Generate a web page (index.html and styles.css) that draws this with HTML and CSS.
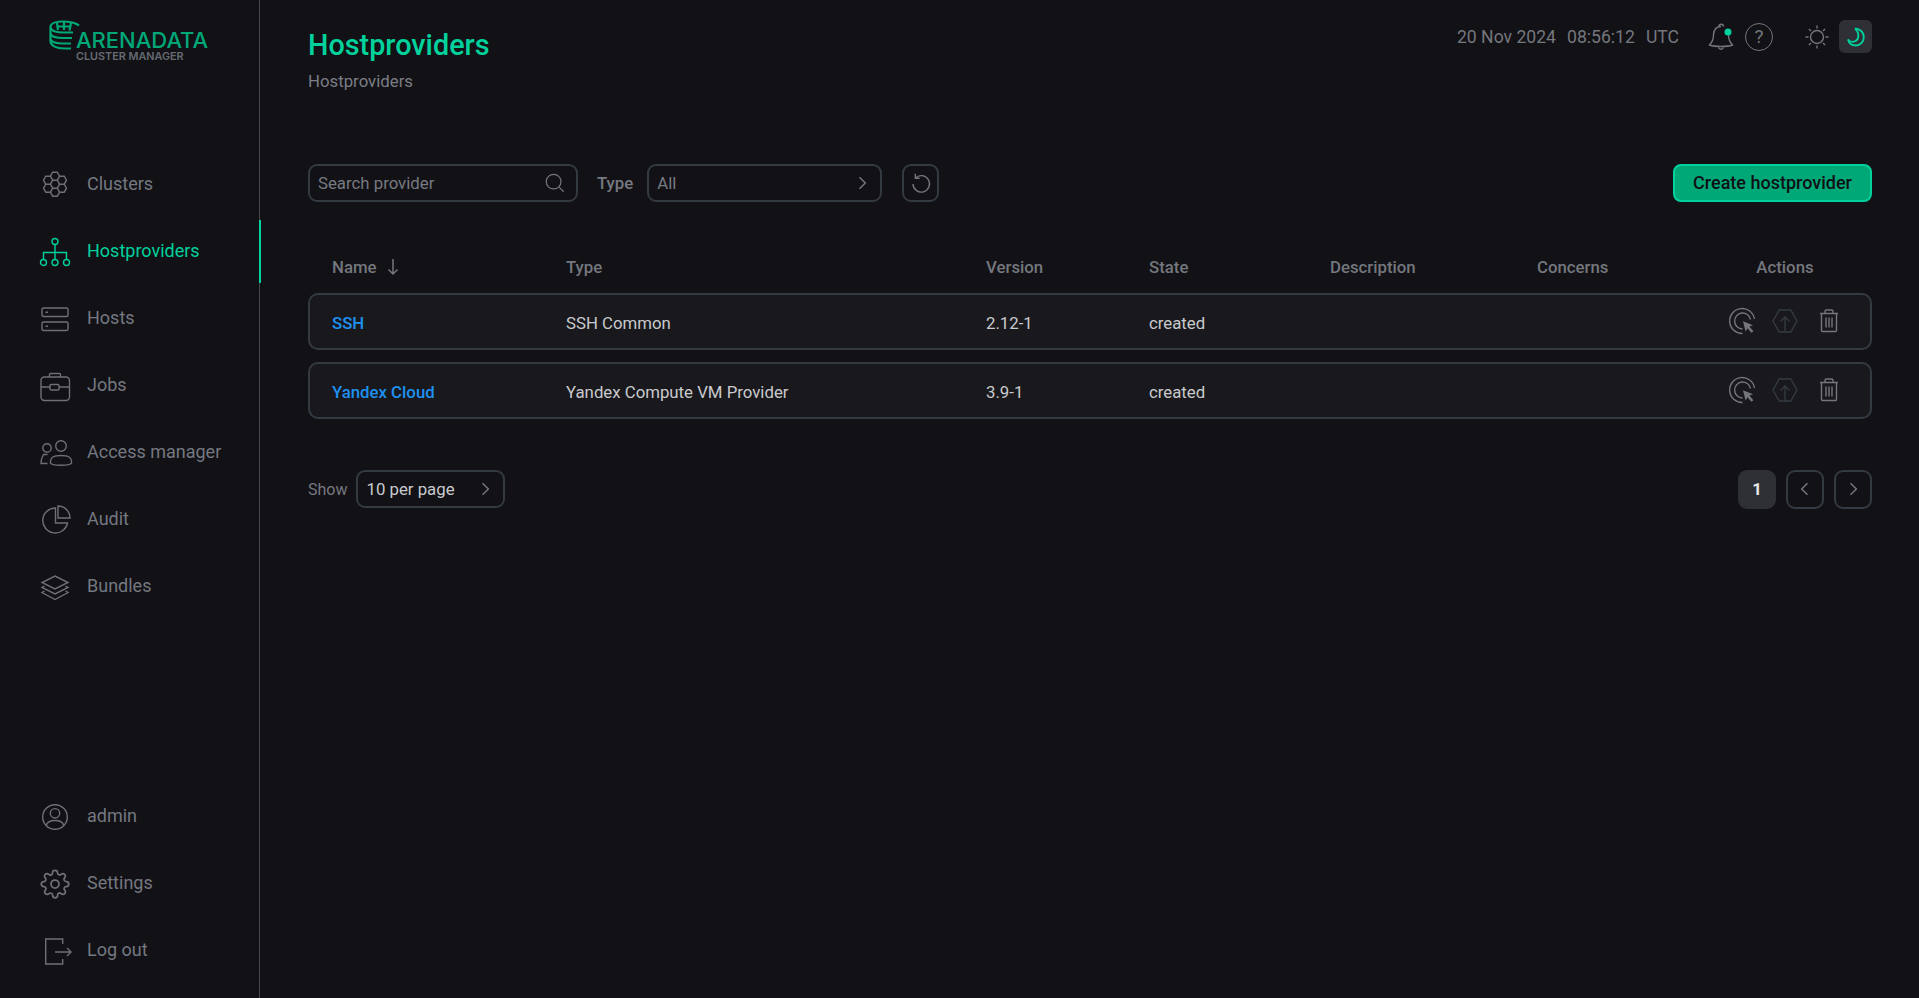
FILE: index.html
```html
<!DOCTYPE html>
<html lang="en">
<head>
<meta charset="utf-8">
<title>Hostproviders</title>
<link rel="stylesheet" href="styles.css">
</head>
<body>
<svg class="defs" width="0" height="0" aria-hidden="true">
  <symbol id="i-click" viewBox="0 0 30 30">
    <path d="M15.5 27.5A12.5 12.5 0 1 1 27.5 13" />
    <path d="M15.5 23A8 8 0 1 1 23.5 13.5" />
    <path class="solid" d="M16 15.2L26 19.3L22.4 20.6L26.4 25.2L24.4 26.8L20.6 22.3L18.6 25.6Z" />
  </symbol>
  <symbol id="i-up" viewBox="0 0 30 30">
    <path d="M9.2 4H20.8L27 15L20.8 26H9.2L3 15Z" />
    <path d="M15 26V11M10.5 15.5L15 11L19.500 15.500" />
  </symbol>
  <symbol id="i-trash" viewBox="0 0 30 30">
    <path d="M6 7.500H24M11 7.500V5.500A1.500 1.500 0 0 1 12.500 4H17.500A1.500 1.500 0 0 1 19 5.500V7.500M7.500 7.500V24.500A1 1 0 0 0 8.500 25.500H21.500A1 1 0 0 0 22.500 24.500V7.500M12 11.500V21.500M15 11.500V21.500M18 11.500V21.500" />
  </symbol>
</svg>

<aside class="sidebar">
  <div class="logo">
    <svg class="logo-mark" viewBox="0 0 31 30" width="31" height="30">
      <path d="M30 5.500C26 2.500 20 1.500 14 1.500C8 1.500 1.500 3 1.500 7V21C1.500 26 8 28.500 15 28.500H22" />
      <path d="M1.500 8C3 11 9 12.500 14 12.500H24M1.500 14C3 17 9 18 14 18H23M1.500 19.500C3 22.500 9 23.500 14 23.500H22" />
      <path d="M8 3L9 10M15 2V10M22 3L20.500 10.500M7.500 6.500H22" />
    </svg>
    <div class="logo-text">
      <span class="logo-name">ARENADATA</span>
      <span class="logo-sub">CLUSTER MANAGER</span>
    </div>
  </div>

  <nav class="nav">
    <a class="nav-item">
      <svg class="nav-icon" viewBox="0 0 30 30"><path d="M10.400 6.200L12.700 2.200H17.300L19.600 6.200L17.300 10.200H12.700ZM10.400 14.200L12.700 10.200H17.300L19.600 14.200L17.300 18.200H12.700ZM10.400 22.200L12.700 18.200H17.300L19.600 22.200L17.300 26.200H12.700ZM3.500 10.200L5.800 6.200H10.400L12.700 10.200L10.400 14.200H5.800ZM17.300 10.200L19.600 6.200H24.200L26.500 10.200L24.200 14.200H19.600ZM3.500 18.200L5.800 14.200H10.400L12.700 18.200L10.400 22.200H5.800ZM17.300 18.200L19.600 14.200H24.200L26.500 18.200L24.200 22.200H19.600Z"/></svg>
      <span>Clusters</span>
    </a>
    <a class="nav-item active">
      <svg class="nav-icon" viewBox="0 0 30 30"><circle cx="15" cy="4.500" r="3"/><path d="M15 7.500V22M3.500 22V15.500H26.500V22"/><circle cx="3.500" cy="25.500" r="3"/><circle cx="15" cy="25.500" r="3"/><circle cx="26.500" cy="25.500" r="3"/></svg>
      <span>Hostproviders</span>
    </a>
    <a class="nav-item">
      <svg class="nav-icon" viewBox="0 0 30 30"><rect x="2" y="4" width="26" height="8.500" rx="1.500"/><rect x="2" y="18" width="26" height="8.500" rx="1.500"/><path d="M5.500 8.200H8M5.500 22.200H8"/></svg>
      <span>Hosts</span>
    </a>
    <a class="nav-item">
      <svg class="nav-icon" viewBox="0 0 30 30"><rect x="1" y="6" width="28.500" height="23.500" rx="3.500"/><path d="M9.500 6V3.500A1 1 0 0 1 10.500 2.500H19.500A1 1 0 0 1 20.500 3.500V6M1 16H10M19 16H29.500"/><rect x="10" y="13.500" width="9" height="5.500" rx="1"/></svg>
      <span>Jobs</span>
    </a>
    <a class="nav-item">
      <svg class="nav-icon" viewBox="0 0 30 30"><circle cx="21" cy="8" r="5.300"/><path d="M10.500 25C10 19 14 17.500 21 17.500C28 17.500 32 19 31.500 25C30 28 12 28 10.500 25Z"/><circle cx="7" cy="10" r="4.200"/><path d="M7.500 16.500H3.500C2 19 1 22 1 25.500H7.500"/></svg>
      <span>Access manager</span>
    </a>
    <a class="nav-item">
      <svg class="nav-icon" viewBox="0 0 30 30"><path d="M15.500 3A12.500 12.500 0 1 0 27.500 18H15.500Z"/><path d="M18 1A12 12 0 0 1 30 13H18Z"/></svg>
      <span>Audit</span>
    </a>
    <a class="nav-item">
      <svg class="nav-icon" viewBox="0 0 30 30"><path d="M15 4L28 10.500L15 17L2 10.500Z"/><path d="M4.500 14L2 15.500L15 22L28 15.500L25.500 14"/><path d="M4.500 19L2 20.500L15 27.500L28 20.500L25.500 19"/></svg>
      <span>Bundles</span>
    </a>
  </nav>

  <nav class="nav nav-bottom">
    <a class="nav-item">
      <svg class="nav-icon" viewBox="0 0 30 30"><circle cx="15" cy="15" r="12.300"/><circle cx="15" cy="11.300" r="4.700"/><path d="M6.300 23.700C7 19.500 11 18.500 15 18.500S23 19.500 23.700 23.700"/></svg>
      <span>admin</span>
    </a>
    <a class="nav-item">
      <svg class="nav-icon" viewBox="0 0 24 24"><circle cx="12" cy="12" r="3.200"/><path d="M19.400 15a1.650 1.650 0 0 0 .33 1.820l.06.06a2 2 0 0 1 0 2.830 2 2 0 0 1-2.830 0l-.06-.06a1.650 1.650 0 0 0-1.820-.33 1.650 1.650 0 0 0-1 1.510V21a2 2 0 0 1-2 2 2 2 0 0 1-2-2v-.09A1.650 1.650 0 0 0 9 19.400a1.650 1.650 0 0 0-1.820.33l-.06.06a2 2 0 0 1-2.830 0 2 2 0 0 1 0-2.830l.06-.06a1.650 1.650 0 0 0 .33-1.820 1.650 1.650 0 0 0-1.510-1H3a2 2 0 0 1-2-2 2 2 0 0 1 2-2h.09A1.650 1.650 0 0 0 4.600 9a1.650 1.650 0 0 0-.33-1.820l-.06-.06a2 2 0 0 1 0-2.830 2 2 0 0 1 2.830 0l.06.06a1.650 1.650 0 0 0 1.820.33H9a1.650 1.650 0 0 0 1-1.510V3a2 2 0 0 1 2-2 2 2 0 0 1 2 2v.09a1.650 1.650 0 0 0 1 1.510 1.650 1.650 0 0 0 1.820-.33l.06-.06a2 2 0 0 1 2.830 0 2 2 0 0 1 0 2.830l-.06.06a1.650 1.650 0 0 0-.33 1.820V9a1.650 1.650 0 0 0 1.510 1H21a2 2 0 0 1 2 2 2 2 0 0 1-2 2h-.09a1.650 1.650 0 0 0-1.510 1z"/></svg>
      <span>Settings</span>
    </a>
    <a class="nav-item">
      <svg class="nav-icon" viewBox="0 0 30 30"><path d="M22.700 8V3H5.700V28H22.700V23"/><path d="M15 16H31M27 12L31 16L27 20"/></svg>
      <span>Log out</span>
    </a>
  </nav>
</aside>

<main class="main">
  <header class="page-head">
    <div class="page-title-block">
      <h1 class="page-title">Hostproviders</h1>
      <div class="breadcrumb">Hostproviders</div>
    </div>
    <div class="top-tools">
      <div class="clock"><span>20 Nov 2024</span><span>08:56:12</span><span>UTC</span></div>
      <div class="top-icons">
        <svg class="top-icon" viewBox="0 0 30 30">
          <path d="M13 4.500A2.200 2.200 0 1 1 17.500 4.500"/>
          <path d="M15 4.500C9.500 4.500 7.500 9 7.500 13C7.500 18 6 20.500 3.500 23C9 25 21 25 26.500 23C24 20.500 22.500 18 22.500 13"/>
          <path d="M12.500 25.500A2.700 2.700 0 0 0 17.500 25.500"/>
          <circle class="dot" cx="22" cy="10" r="3.500"/>
        </svg>
        <span class="help">?</span>
        <svg class="top-icon sun" viewBox="0 0 30 30">
          <circle cx="15" cy="15" r="6.500"/>
          <path d="M15 3.500V6.500M15 23.500V26.500M3.500 15H6.500M23.500 15H26.500M6.900 6.900L9 9M21 21L23.100 23.100M6.900 23.100L9 21M21 9L23.100 6.900"/>
        </svg>
        <span class="moon-btn">
          <svg class="moon" viewBox="0 0 24 24"><path d="M11 3.500C15 3.500 19.800 6.700 19.800 12.200C19.800 17 16 20.500 11.800 20.500C8 20.500 5 18.300 4 14.500"/><path d="M4 14.500C6 17 9.500 17.500 12 15.800C15.500 13.500 15 6.800 11 3.500"/></svg>
        </span>
      </div>
    </div>
  </header>

  <section class="toolbar">
    <div class="field search">
      <span class="placeholder">Search provider</span>
      <svg class="field-icon" viewBox="0 0 24 24"><circle cx="10.500" cy="10.500" r="8"/><path d="M16.500 16.500L21.500 21.500"/></svg>
    </div>
    <span class="label">Type</span>
    <div class="field type-select">
      <span class="placeholder">All</span>
      <svg class="chev" viewBox="0 0 24 24"><path d="M9 5L16 12L9 19"/></svg>
    </div>
    <button class="reset" type="button" aria-label="Reset">
      <svg viewBox="0 0 24 24"><path d="M6 6.500A9 9 0 1 1 3.300 13"/><path d="M5.800 2V6.800H10.500"/></svg>
    </button>
    <button class="primary" type="button">Create hostprovider</button>
  </section>

  <section class="table">
    <div class="tr th">
      <span class="name-head">Name
        <svg viewBox="0 0 16 20"><path d="M8 2V17M3.500 12.500L8 17L12.500 12.500"/></svg>
      </span>
      <span>Type</span><span>Version</span><span>State</span><span>Description</span><span>Concerns</span>
      <span class="center">Actions</span>
    </div>
    <div class="tr row">
      <a class="link">SSH</a><span>SSH Common</span><span>2.12-1</span><span>created</span><span></span><span></span>
      <span class="actions">
        <svg class="act"><use href="#i-click"/></svg>
        <svg class="act dim"><use href="#i-up"/></svg>
        <svg class="act"><use href="#i-trash"/></svg>
      </span>
    </div>
    <div class="tr row">
      <a class="link">Yandex Cloud</a><span>Yandex Compute VM Provider</span><span>3.9-1</span><span>created</span><span></span><span></span>
      <span class="actions">
        <svg class="act"><use href="#i-click"/></svg>
        <svg class="act dim"><use href="#i-up"/></svg>
        <svg class="act"><use href="#i-trash"/></svg>
      </span>
    </div>
  </section>

  <footer class="pager-row">
    <span class="label show">Show</span>
    <div class="field per-page">
      <span>10 per page</span>
      <svg class="chev" viewBox="0 0 24 24"><path d="M9 5L16 12L9 19"/></svg>
    </div>
    <div class="pager">
      <span class="page current">1</span>
      <span class="page"><svg class="chev" viewBox="0 0 24 24"><path d="M15 5L8 12L15 19"/></svg></span>
      <span class="page"><svg class="chev" viewBox="0 0 24 24"><path d="M9 5L16 12L9 19"/></svg></span>
    </div>
  </footer>
</main>
</body>
</html>
```

FILE: styles.css
```css
* { box-sizing: border-box; }

html, body { height: 100%; }

body {
  margin: 0;
  display: flex;
  height: 100vh;
  overflow: hidden;
  background: #121115;
  color: #c9cacd;
  font-family: Roboto, "Liberation Sans", sans-serif;
  font-size: 16.800px;
}

.defs { display: block; width: 0; height: 0; overflow: hidden; }

svg { fill: none; stroke: currentColor; stroke-width: 1.500; overflow: visible; flex: none; }

/* sidebar */
.sidebar {
  width: 260px;
  flex: none;
  display: flex;
  flex-direction: column;
  border-right: 1px solid #45474c;
  padding-bottom: 16px;
}

.logo {
  height: 153px;
  flex: none;
  display: flex;
  align-items: flex-start;
  padding: 20px 0 0 49px;
}

.logo-mark { color: #00a878; stroke-width: 2.200; }

.logo-text {
  display: flex;
  flex-direction: column;
  margin: 9px 0 0 -4px;
}

.logo-name {
  font-family: Inter, sans-serif;
  font-weight: 500;
  font-size: 22px;
  line-height: 22px;
  color: #00a878;
  white-space: nowrap;
}

.logo-sub {
  font-family: Inter, sans-serif;
  font-weight: 600;
  font-size: 10.800px;
  line-height: 12px;
  color: #666b73;
  white-space: nowrap;
}

.nav { display: flex; flex-direction: column; gap: 4px; }

.nav-bottom { margin-top: auto; }

.nav-item {
  position: relative;
  height: 63px;
  display: flex;
  align-items: center;
  gap: 17px;
  padding-left: 40px;
  font-size: 18px;
  color: #747881;
}

.nav-item span { margin-bottom: 2px; }

.nav-item.active { color: #00d19d; }

.nav-item.active::after {
  content: "";
  position: absolute;
  top: 0;
  bottom: 0;
  right: -2px;
  width: 2px;
  background: #00d19d;
}

.nav-icon { width: 30px; height: 30px; color: #6e7076; stroke-width: 1.400; }

.active .nav-icon { color: #00d19d; }

/* main */
.main {
  flex: 1;
  min-width: 0;
  display: flex;
  flex-direction: column;
  padding: 0 47px 0 48px;
}

.page-head {
  height: 164px;
  flex: none;
  display: flex;
  justify-content: space-between;
  align-items: flex-start;
  padding-top: 21px;
}

.page-title {
  margin: 0;
  font-size: 28.800px;
  line-height: 48px;
  font-weight: 500;
  color: #00d19d;
}

.breadcrumb { margin-top: 0; line-height: 24px; color: #7a7d85; }

.top-tools { display: flex; align-items: center; height: 33px; margin-top: -1px; }

.clock {
  display: flex;
  gap: 11px;
  font-size: 17.600px;
  color: #74777e;
}

.top-icons { display: flex; align-items: center; margin-left: 27px; }

.top-icon { width: 30px; height: 30px; color: #74767b; stroke-width: 1.400; }

.dot { fill: #00d19d; stroke: none; }

.help {
  width: 28px;
  height: 28px;
  margin-left: 9px;
  border: 1.500px solid #74767b;
  border-radius: 50%;
  display: flex;
  align-items: center;
  justify-content: center;
  color: #74767b;
  font-size: 19px;
}

.sun { margin-left: 29px; }

.moon-btn {
  width: 33px;
  height: 33px;
  margin-left: 7px;
  border-radius: 6px;
  background: #2e3035;
  display: flex;
  align-items: center;
  justify-content: center;
}

.moon { width: 24px; height: 24px; color: #00d19d; stroke-width: 1.800; }

/* toolbar */
.toolbar { display: flex; align-items: center; height: 38px; flex: none; }

.field {
  height: 38px;
  display: flex;
  align-items: center;
  justify-content: space-between;
  padding: 0 8px;
  border: 2px solid #343a41;
  border-radius: 9px;
}

.search { width: 270px; padding-right: 10px; }

.type-select { width: 235px; margin-right: 20px; }

.placeholder { color: #777a82; }

.label { color: #767980; font-weight: 500; }

.toolbar .label { margin: 0 14px 0 19px; }

.field-icon { width: 22px; height: 22px; color: #74767b; stroke-width: 1.300; }

.chev { width: 20px; height: 20px; color: #74767b; stroke-width: 1.800; }

.reset {
  width: 37px;
  height: 38px;
  padding: 0;
  background: none;
  border: 2px solid #343a41;
  border-radius: 9px;
  color: #74767b;
  display: flex;
  align-items: center;
  justify-content: center;
}

.reset svg { width: 22px; height: 22px; stroke-width: 1.500; }

.primary {
  margin-left: auto;
  width: 199px;
  height: 38px;
  padding: 0 0 2px;
  background: #00a878;
  border: 2px solid #00d19d;
  border-radius: 8px;
  font: 500 18px Roboto, sans-serif;
  color: #101014;
}

/* table */
.table { display: flex; flex-direction: column; gap: 12.500px; margin-top: 0; flex: none; }

.tr {
  display: grid;
  grid-template-columns: 234px 420px 163px 181px 207px 163px 170px;
  align-items: center;
  padding-left: 22px;
  border: 2px solid transparent;
}

.th {
  height: 91.300px;
  padding-top: 38px;
  margin-bottom: -12.500px;
  color: #74777e;
  font-weight: 500;
}

.name-head { display: inline-flex; align-items: center; gap: 8px; }

.name-head svg { width: 16px; height: 20px; stroke-width: 1.500; }

.center { text-align: center; }

.row {
  height: 56.500px;
  background: #19191d;
  border-color: #343a41;
  border-radius: 10px;
  padding-top: 2px;
}

.link { color: #1e90f0; font-weight: 500; }

.actions { display: flex; justify-content: center; gap: 13.500px; margin-top: -3px; }

.act { width: 30px; height: 30px; color: #74767b; stroke-width: 1.400; }

.act.dim { color: #343a41; }

.solid { fill: currentColor; stroke: none; }

/* footer */
.pager-row { display: flex; align-items: center; margin-top: 51px; flex: none; }

.show { font-weight: 400; margin-right: 9px; font-size: 16px; }

.per-page { width: 149px; color: #c9cacd; }

.pager { margin-left: auto; display: flex; gap: 10px; }

.page {
  width: 38px;
  height: 39px;
  display: flex;
  align-items: center;
  justify-content: center;
  border: 2px solid #343a41;
  border-radius: 9px;
}

.page.current {
  background: #2e3035;
  border-color: #2e3035;
  color: #e6e7e9;
  font-weight: 700;
}
```
